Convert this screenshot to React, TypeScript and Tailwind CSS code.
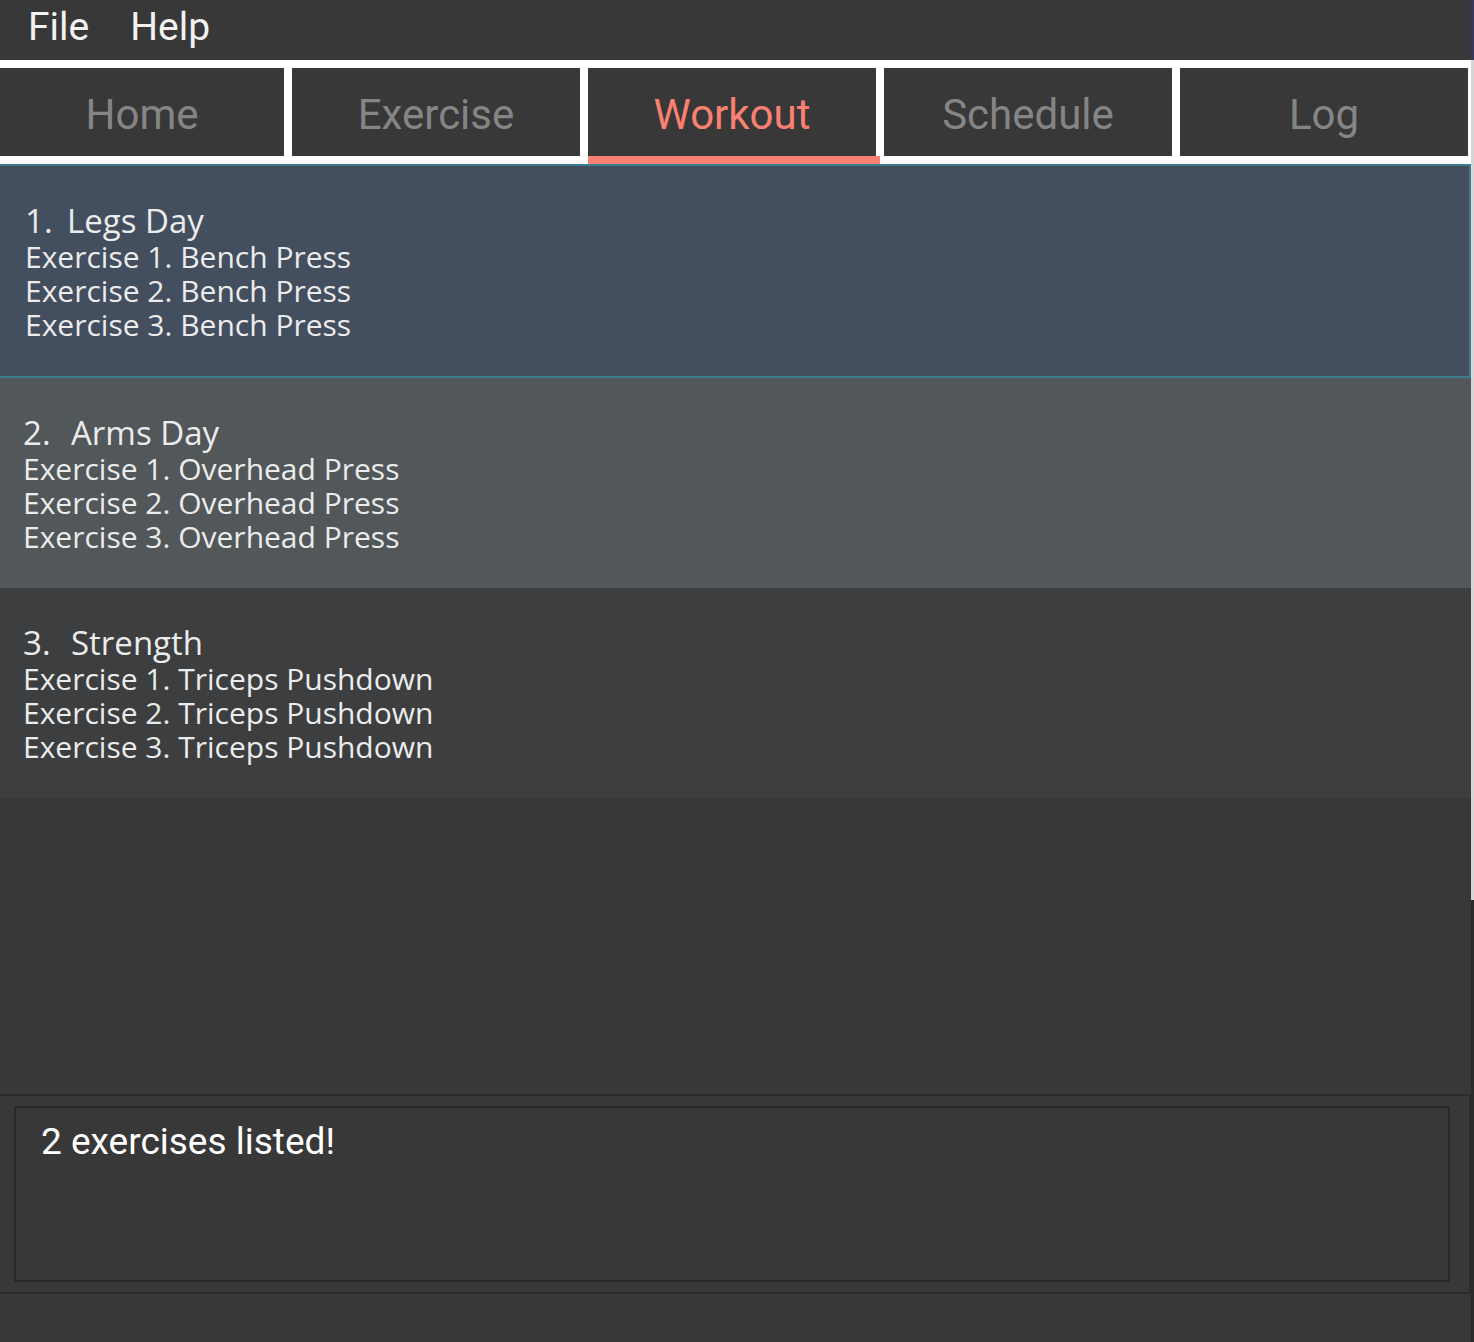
const tabs = ["Home", "Exercise", "Workout", "Schedule", "Log"];

const workouts = [
  { index: 1, name: "Legs Day", exercise: "Bench Press" },
  { index: 2, name: "Arms Day", exercise: "Overhead Press" },
  { index: 3, name: "Strength", exercise: "Triceps Pushdown" },
];

const ui = { fontFamily: "Roboto, 'Liberation Sans', sans-serif" };
const body = { fontFamily: "'Open Sans', 'Noto Sans', sans-serif" };

function WorkoutCard({ index, name, exercise }: { index: number; name: string; exercise: string }) {
  const selected = index === 1;
  const bg =
    index === 1
      ? "bg-[#434e5f] border-y-2 border-r-2 border-[#3d7b8e] pl-[25px]"
      : index === 2
        ? "bg-[#525759] pl-[23px]"
        : "bg-[#3c3e40] pl-[23px]";
  return (
    <div className={`${bg} shrink-0`}>
      <div className="h-[210px] pt-[36px] text-[#ececec]" style={body}>
        <div className="text-[33px] leading-[38px] flex">
          <span className={selected ? "inline-block w-[42px]" : "inline-block w-[48px]"}>{index}.</span>
          <span>{name}</span>
        </div>
        {[1, 2, 3].map((n) => (
          <div key={n} className="text-[30px] leading-[34px]">
            Exercise {n}. {exercise}
          </div>
        ))}
      </div>
    </div>
  );
}

export default function App() {
  return (
    <div className="w-[1474px] h-[1342px] bg-[#383838] flex overflow-hidden">
      <div className="w-[1471px] flex flex-col">
        {/* menu bar */}
        <div className="h-[60px] flex items-center gap-[41px] pl-[28px] pb-[6px] text-[39px] text-[#f2f2f2]" style={ui}>
          <span>File</span>
          <span>Help</span>
        </div>

        {/* tab bar */}
        <div className="bg-white pt-[8px] flex gap-[8px]" style={ui}>
          {tabs.map((t, i) => {
            const active = t === "Workout";
            return (
              <div key={t} className={`${i === 0 ? "w-[284px]" : "w-[288px]"} flex flex-col`}>
                <div
                  className={`h-[88px] pt-[4px] bg-[#383838] flex items-center justify-center text-[42px] ${
                    active ? "text-[#fa8072]" : "text-[#858585]"
                  }`}
                >
                  {t}
                </div>
                <div className={`h-[8px] ${active ? "bg-[#fa8072] w-[292px]" : ""}`} />
              </div>
            );
          })}
        </div>

        {/* workout list */}
        {workouts.map((w) => (
          <WorkoutCard key={w.index} {...w} />
        ))}
        <div className="flex-1" />

        {/* result display */}
        <div className="border-y-2 border-r-2 border-[#2b2b2b] pt-[10px] pb-[10px] pl-[14px] pr-[19px]">
          <div className="h-[176px] border-2 border-[#2a2a2a] pl-[25px] pt-[14px] text-white text-[37px] leading-[40px]" style={ui}>
            2 exercises listed!
          </div>
        </div>
        <div className="h-[48px]" />
      </div>

      {/* neighbouring window edge */}
      <div className="w-[3px] flex flex-col">
        <div className="h-[60px] bg-[#38385a]" />
        <div className="h-[840px] bg-[#d6d6d6]" />
        <div className="flex-1 bg-[#2b2b2b]" />
      </div>
    </div>
  );
}
